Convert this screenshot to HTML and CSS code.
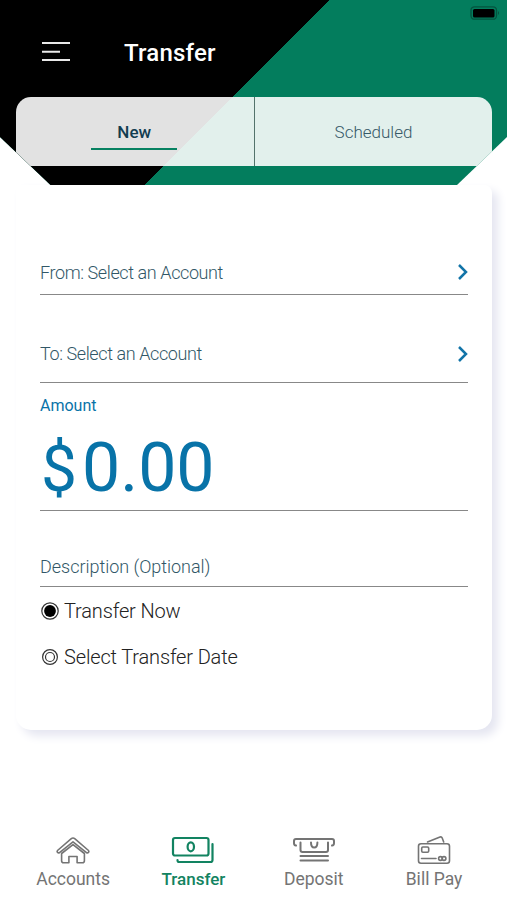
FILE: index.html
```
<!DOCTYPE html>
<html lang="en">
<head>
<meta charset="utf-8">
<title>Transfer</title>
<link rel="stylesheet" href="styles.css">
</head>
<body>
<header class="hero">
  <div class="titlebar">
    <svg class="menu" width="28" height="22" viewBox="0 0 28 22"><path d="M0 2h28M0 10.700h18M0 19h28"/></svg>
    <h1>Transfer</h1>
    <svg class="battery" width="30" height="14" viewBox="0 0 30 14"><rect class="shell" x="1" y=".8" width="25.500" height="12.400" rx="3.500"/><rect x="3" y="3" width="21.500" height="8.500" rx="1.500"/><path class="cap" d="M28 5q2 2 0 4z"/></svg>
  </div>
  <nav class="tabs">
    <a class="tab active"><span>New</span></a>
    <a class="tab"><span>Scheduled</span></a>
  </nav>
</header>
<main class="card">
  <div class="row account from"><span>From: Select an Account</span><svg class="chevron" width="10" height="16" viewBox="0 0 10 16"><path d="M1 1l7 7-7 7"/></svg></div>
  <div class="row account to"><span>To: Select an Account</span><svg class="chevron" width="10" height="16" viewBox="0 0 10 16"><path d="M1 1l7 7-7 7"/></svg></div>
  <div class="amount">
    <label>Amount</label>
    <div class="value"><span class="currency">$</span><span>0.00</span></div>
  </div>
  <div class="row description"><span>Description (Optional)</span></div>
  <div class="option"><svg width="20" height="20" viewBox="0 0 20 20"><circle class="ring" cx="10" cy="10" r="8.200"/><circle cx="10" cy="10" r="5.900"/></svg><span>Transfer Now</span></div>
  <div class="option second"><svg width="20" height="20" viewBox="0 0 20 20"><circle class="ring" cx="10" cy="10" r="7.400"/><circle class="ring" cx="10" cy="10" r="4.500"/></svg><span>Select Transfer Date</span></div>
</main>
<footer class="bottom">
  <a class="item"><svg width="44" height="32" viewBox="0 0 44 32"><path d="M6.500 16.500 20 4.800q2-1.600 4 0L37.500 16.500q.8.900 0 1.900-1 1-2 .2L22 7.900 8.500 18.600q-1 .8-2-.2-.8-1 0-1.900zM10.600 19.500 22 10.600l11.400 8.900v7.300q0 2-2 2h-5.300v-6.300h-8.200v6.300h-5.300q-2 0-2-2z"/></svg><span>Accounts</span></a>
  <a class="item current"><svg width="44" height="32" viewBox="0 0 44 32"><rect class="bold" x="2" y="4" width="35.500" height="17.500" rx="2"/><ellipse class="bold" cx="19.800" cy="12.800" rx="3.200" ry="4.500"/><path class="bold" d="M41.500 10v16q0 2-2 2H8q-1.500 0-1.500-2"/></svg><span>Transfer</span></a>
  <a class="item"><svg width="44" height="32" viewBox="0 0 44 32"><path class="slot" d="M4 11.500q-2-.3-2-2.300V7q0-2 2-2h36q2 0 2 2v2.200q0 2-2 2.300M8.500 8.500V16q0 2 2 2h23.500q2 0 2-2V8.500M19 8.500q0 5 3.200 5t3.200-5M8.500 22H36M8.500 26.500H36"/></svg><span>Deposit</span></a>
  <a class="item"><svg width="44" height="32" viewBox="0 0 44 32"><rect x="6.500" y="9.800" width="31" height="19.400" rx="2.500"/><rect x="9.700" y="13" width="7" height="5.200" rx="1.200"/><path d="M9.500 24.500H24M15.500 8 28 3q1.600-.5 2.200 1l1.500 4"/><circle cx="28.500" cy="24.500" r="1.900"/><circle cx="32" cy="24.500" r="1.900"/></svg><span>Bill Pay</span></a>
</footer>
</body>
</html>
```
FILE: styles.css
```
* { box-sizing: border-box; }
body {
  margin: 0;
  height: 900px;
  display: flex;
  flex-direction: column;
  background: #fff;
  font-family: Roboto, "Liberation Sans", sans-serif;
  overflow: hidden;
}
svg { flex: none; display: block; }
span, h1, label { white-space: nowrap; }
.hero {
  position: relative;
  z-index: 1;
  flex: none;
  height: 185px;
  padding: 0 15px 0 15.5px;
  background: linear-gradient(to bottom right, #000 0 50%, #037d5d 50%) 0 0 / 329px 329px no-repeat, #037d5d;
  clip-path: polygon(0 0, 100% 0, 100% 137px, 457px 100%, 50.5px 100%, 0 137px);
}
.titlebar { height: 97.4px; display: flex; align-items: flex-start; }
.menu { margin: 41px 54px 0 26.5px; fill: none; stroke: #e9e9e9; stroke-width: 2; }
h1 {
  margin: 38px 0 0;
  font-size: 24px;
  line-height: 30px;
  font-weight: 500;
  letter-spacing: .2px;
  color: #fff;
}
.battery { margin: 6px -8px 0 auto; }
.shell { fill: none; stroke: #04543f; stroke-width: 1.3; }
.cap { fill: #04543f; }
.tabs {
  height: 69px;
  display: grid;
  grid-template-columns: 239.5px 1fr;
  border-radius: 15px 15px 0 0;
  background: rgba(255, 255, 255, .885);
}
.tab { display: flex; justify-content: center; padding-top: 24px; font-size: 17px; line-height: 22px; font-weight: 300; color: #365968; }
.tab.active { padding-right: 1px; border-right: 1px solid #53736b; font-weight: 500; color: #123d50; }
.active span { height: 29px; padding: 0 26px; border-bottom: 2.5px solid #078161; }
.card {
  flex: none;
  width: 476.5px;
  height: 545px;
  margin-left: 15.5px;
  padding: 67.5px 24px 0 24.5px;
  border-radius: 0 8px 15px 15px;
  background: #fff;
  box-shadow: 6px 6px 10px #e5e6f1;
}
.row { display: flex; justify-content: space-between; border-bottom: 1.5px solid #888; font-size: 18px; line-height: 24px; font-weight: 300; color: #315767; }
.account { letter-spacing: -.4px; }
.from { height: 42.5px; padding-top: 8px; }
.to { height: 87.5px; padding-top: 47px; }
.chevron { margin-top: 3.5px; fill: none; stroke: #1274a8; stroke-width: 2.5; }
.amount { height: 128.5px; padding-top: 12px; border-bottom: 1.5px solid #888; color: #0873a8; }
.amount label { display: block; height: 33px; font-size: 16px; line-height: 22px; }
.value { display: flex; font-size: 68px; line-height: 80px; }
.currency { width: 42px; padding-top: 2px; font-size: 64px; text-indent: 1px; }
.description { height: 76px; padding-top: 44px; letter-spacing: -.03px; }
.option { display: flex; align-items: center; height: 47px; gap: 4.5px; font-size: 20px; font-weight: 300; letter-spacing: -.15px; color: #222; }
.option svg { margin-left: -.5px; }
.ring { fill: none; stroke: #333; stroke-width: 1.2; }
.second { height: 46px; }
.bottom { display: grid; grid-template-columns: repeat(4, 120.3px); margin: 103.5px 0 0 13px; }
.item { display: flex; flex-direction: column; align-items: center; font-size: 17.5px; line-height: 26px; color: #747474; }
.item svg { fill: none; stroke: currentColor; stroke-width: 1.6; stroke-linejoin: round; stroke-linecap: round; }
.item .bold { stroke-width: 2.2; }
.item .slot { stroke-width: 2; }
.item.current { color: #128361; font-weight: 500; font-size: 17px; }
```
